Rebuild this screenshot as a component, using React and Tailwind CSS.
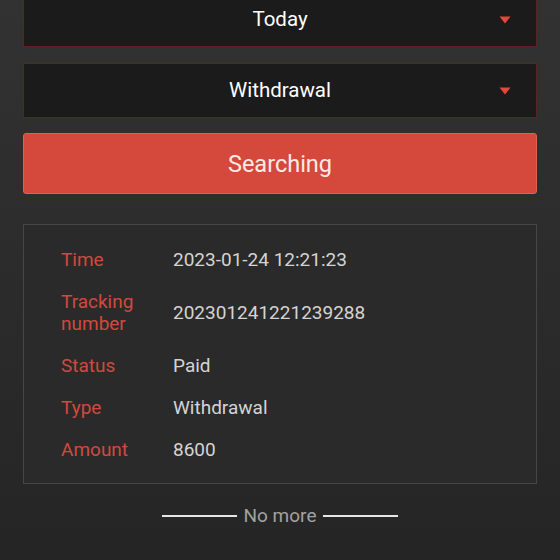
import React from "react";

function Select({ label }) {
  return (
    <div className="relative flex h-[55px] items-center justify-center border border-[#5a2424] bg-[#1b1b1b]">
      <span className="text-[20.5px] text-white">{label}</span>
      <svg className="absolute right-[25px] top-1/2 -translate-y-1/2" width="12" height="8" viewBox="0 0 12 8">
        <polygon points="0.5,0.5 11.5,0.5 6,7.5" fill="#e2483c" />
      </svg>
    </div>
  );
}

const rows = [
  ["Time", "2023-01-24 12:21:23"],
  ["Tracking number", "202301241221239288"],
  ["Status", "Paid"],
  ["Type", "Withdrawal"],
  ["Amount", "8600"],
];

export default function App() {
  return (
    <div
      className="min-h-[560px] w-full overflow-hidden bg-linear-to-b from-[#323232] to-[#252525]"
      style={{ fontFamily: "Roboto, 'Noto Sans', sans-serif" }}
    >
      <div className="-mt-[8px] flex flex-col px-[23px]">
        <Select label="Today" />
        <div className="h-[16px]" />
        <Select label="Withdrawal" />
        <button className="mt-[15px] flex h-[61px] items-center justify-center rounded-[3px] border border-[#e06052] bg-[#d4493b] pt-[3px] text-[23.5px] text-[#fdeae6]">
          Searching
        </button>
        <div className="mt-[30px] border border-[#464646] bg-[#2a2a2a] pb-[12px] pl-[37px] pr-[15px] pt-[14px]">
          {rows.map(([k, v]) => (
            <div key={k} className="flex items-center py-[10px]">
              <div className="w-[112px] shrink-0 text-[19px] leading-[22px] text-[#cf4a3e]">
                {k === "Tracking number" ? (
                  <>
                    Tracking
                    <br />
                    number
                  </>
                ) : (
                  k
                )}
              </div>
              <div className="text-[19px] leading-[22px] text-[#d4d4d4]">{v}</div>
            </div>
          ))}
        </div>
        <div className="mt-[20px] flex items-center justify-center gap-[7px]">
          <div className="h-[2px] w-[75px] bg-[#e6e6e6]" />
          <span className="text-[19px] leading-[24px] text-[#a2a2a2]">No more</span>
          <div className="h-[2px] w-[75px] bg-[#e6e6e6]" />
        </div>
      </div>
    </div>
  );
}
